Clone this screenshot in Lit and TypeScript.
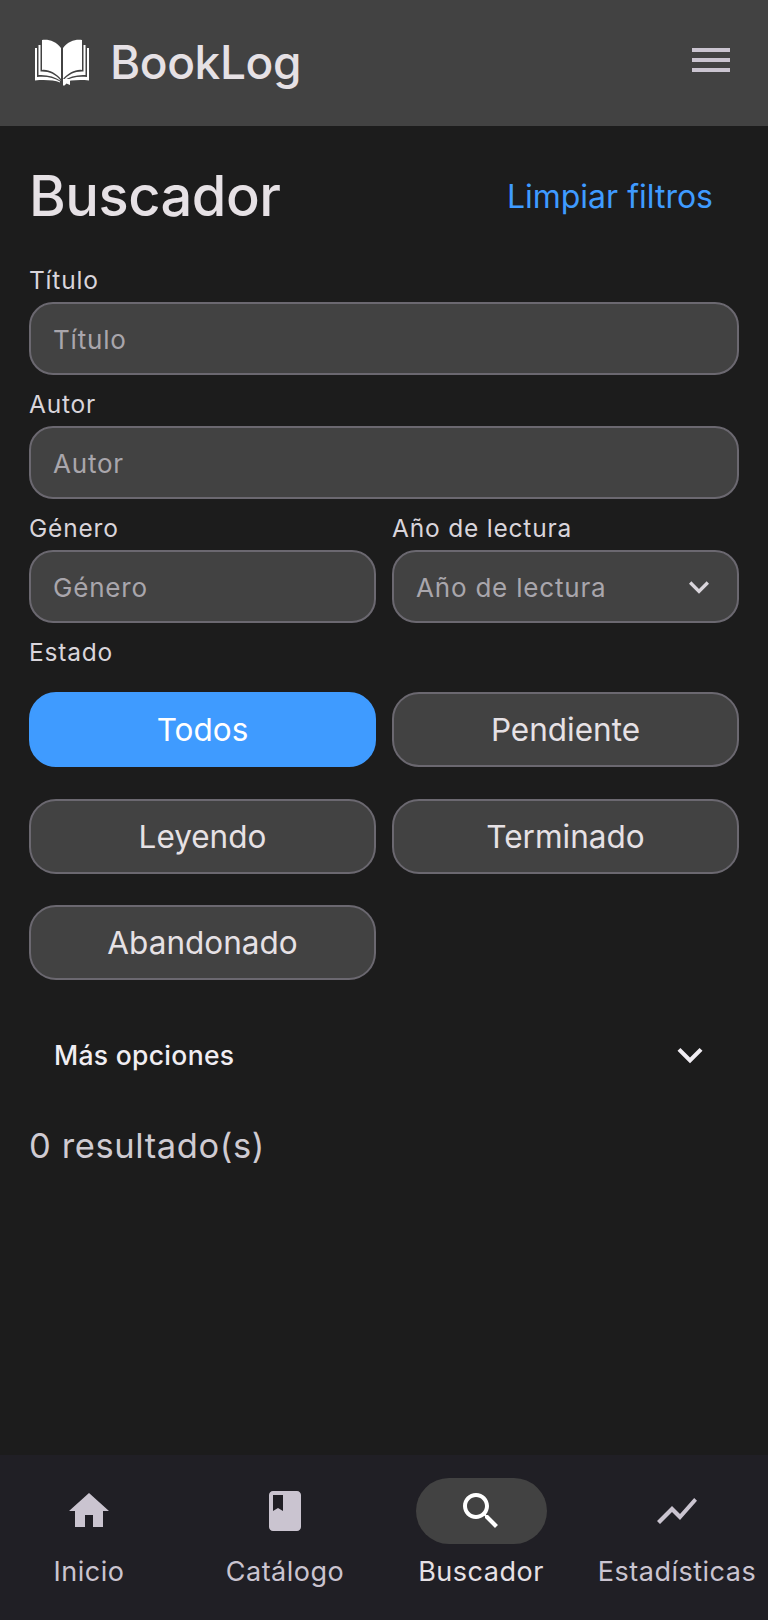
import { LitElement, html, css, svg } from "lit";
import { customElement } from "lit/decorators.js";

const chevron = (size: number) => svg`<svg width=${size} height=${size} viewBox="0 0 24 24" fill="currentColor"><path d="M7.41 8.59 12 13.17l4.59-4.58L18 10l-6 6-6-6z"/></svg>`;

@customElement("app-root")
export class AppRoot extends LitElement {
  static styles = css`
    :host { display: block; width: 768px; height: 1620px; background: #1c1c1c; font-family: "Inter", "Liberation Sans", sans-serif; color: #e6e1e5; }
    .page { display: flex; flex-direction: column; height: 1620px; }
    header { height: 126px; background: #424242; display: flex; align-items: center; padding: 0 38px 0 34px; flex: none; }
    .logo { width: 56px; height: 50px; margin-right: 20px; }
    .brand { font-size: 46px; font-weight: 500; letter-spacing: -0.4px; flex: 1; color: #e6e1e5; margin-top: -2px; }
    .menu { width: 38px; height: 24px; color: #cac4d0; margin-top: -6px; }
    main { flex: 1; padding: 0 29px; }
    .head { display: flex; justify-content: space-between; align-items: center; padding-top: 39px; height: 63px; margin-bottom: 38px; }
    h1 { margin: 0; font-size: 56px; font-weight: 500; letter-spacing: -0.5px; line-height: 63px; }
    .clear { font-size: 32px; color: #3f9bff; margin-right: 26px; }
    .row { display: grid; grid-template-columns: 1fr 1fr; column-gap: 16px; }
    .field { display: flex; flex-direction: column; }
    label { font-size: 24.5px; line-height: 28px; height: 28px; letter-spacing: 0.8px; color: #d9d5db; margin-bottom: 8px; display: block; }
    .input { height: 73px; box-sizing: border-box; border: 2px solid #6b6870; border-radius: 24px; background: #424242; display: flex; align-items: center; justify-content: space-between; padding: 1px 18px 0 22px; font-size: 26px; letter-spacing: 0.8px; color: #a9a6ac; margin-bottom: 15px; }
    .input svg { color: #d9d5db; margin-top: -1px; }
    .state-label { margin-bottom: 26px; }
    .chips { display: grid; grid-template-columns: 1fr 1fr; gap: 31.5px 16px; }
    .chip { height: 75px; box-sizing: border-box; border: 2px solid #6b6870; border-radius: 27px; background: #424242; display: flex; align-items: center; justify-content: center; font-size: 31.5px; color: #e6e1e5; }
    .chip.on { background: #3f9bff; border-color: #3f9bff; color: #fff; }
    .more { display: flex; justify-content: space-between; align-items: center; padding: 0 24px 0 25px; height: 40px; margin-top: 55px; font-size: 26.5px; font-weight: 500; letter-spacing: 0.3px; color: #f0edf2; }
    .count { margin-top: 50px; font-size: 34.5px; line-height: 42px; letter-spacing: 0.6px; color: #cfcbd2; }
    nav { height: 165px; flex: none; background: #201f25; display: grid; grid-template-columns: repeat(4, 196px); justify-content: center; padding-right: 2px; box-sizing: border-box; }
    .tab { display: flex; flex-direction: column; align-items: center; padding-top: 23px; color: #cac4d0; }
    .pill { width: 131px; height: 66px; border-radius: 33px; display: flex; align-items: center; justify-content: center; }
    .tab.on .pill { background: #424242; color: #fff; }
    .tab.on { color: #e6e1e5; }
    .tab span { margin-top: 10px; font-size: 27px; line-height: 36px; letter-spacing: 0.5px; white-space: nowrap; }
  `;
  private tab(label: string, d: any, on = false) {
    return html`<div class="tab ${on ? "on" : ""}"><div class="pill"><svg width="48" height="48" viewBox="0 0 24 24" fill="currentColor">${d}</svg></div><span>${label}</span></div>`;
  }
  render() {
    const home = svg`<path d="M10 20v-6h4v6h5v-8h3L12 3 2 12h3v8z"/>`;
    const book = svg`<path d="M18 2H6c-1.1 0-2 .9-2 2v16c0 1.1.9 2 2 2h12c1.1 0 2-.9 2-2V4c0-1.1-.9-2-2-2zM6 4h5v8l-2.5-1.5L6 12V4z"/>`;
    const search = svg`<path d="M15.5 14h-.79l-.28-.27C15.41 12.59 16 11.11 16 9.5 16 5.91 13.09 3 9.5 3S3 5.91 3 9.5 5.91 16 9.5 16c1.61 0 3.09-.59 4.23-1.57l.27.28v.79l5 4.99L20.49 19l-4.99-5zm-6 0C7.01 14 5 11.99 5 9.5S7.01 5 9.5 5 14 7.01 14 9.5 11.99 14 9.5 14z"/>`;
    const chart = svg`<path d="M3.5 18.49l6-6.01 4 4L22 6.92l-1.41-1.41-7.09 7.97-4-4L2 16.99z"/>`;
    const half = svg`
      <path d="M8 2C14 1 22 3 27 10V41C22 35 14 31 8 32Z"/>
      <path d="M4.500 7H6.500V33.500C14 33 22 36 27 43C21 38.500 13 36.500 4.500 37Z"/>
      <path d="M1 10H3V39C12 38 20 39.500 26 43.500V44.500C20 42 10 41.500 1 42.500Z"/>`;
    return html`<div class="page">
      <header>
        <svg class="logo" viewBox="0 0 56 50" fill="#fff">
          ${half}
          <g transform="matrix(-1 0 0 1 56 0)">${half}</g>
          <path d="M29 41H36V47L32.500 45.500 30.500 47.500H29Z"/>
        </svg>
        <div class="brand">BookLog</div>
        <svg class="menu" viewBox="0 0 38 24" fill="currentColor"><rect y="0" width="38" height="4"/><rect y="10" width="38" height="4"/><rect y="20" width="38" height="4"/></svg>
      </header>
      <main>
        <div class="head"><h1>Buscador</h1><div class="clear">Limpiar filtros</div></div>
        <div class="field"><label>Título</label><div class="input">Título</div></div>
        <div class="field"><label>Autor</label><div class="input">Autor</div></div>
        <div class="row">
          <div class="field"><label>Género</label><div class="input">Género</div></div>
          <div class="field"><label>Año de lectura</label><div class="input">Año de lectura ${chevron(40)}</div></div>
        </div>
        <label class="state-label">Estado</label>
        <div class="chips">
          <div class="chip on">Todos</div><div class="chip">Pendiente</div>
          <div class="chip">Leyendo</div><div class="chip">Terminado</div>
          <div class="chip">Abandonado</div>
        </div>
        <div class="more"><span>Más opciones</span>${chevron(50)}</div>
        <div class="count">0 resultado(s)</div>
      </main>
      <nav>
        ${this.tab("Inicio", home)}
        ${this.tab("Catálogo", book)}
        ${this.tab("Buscador", search, true)}
        ${this.tab("Estadísticas", chart)}
      </nav>
    </div>`;
  }
}
